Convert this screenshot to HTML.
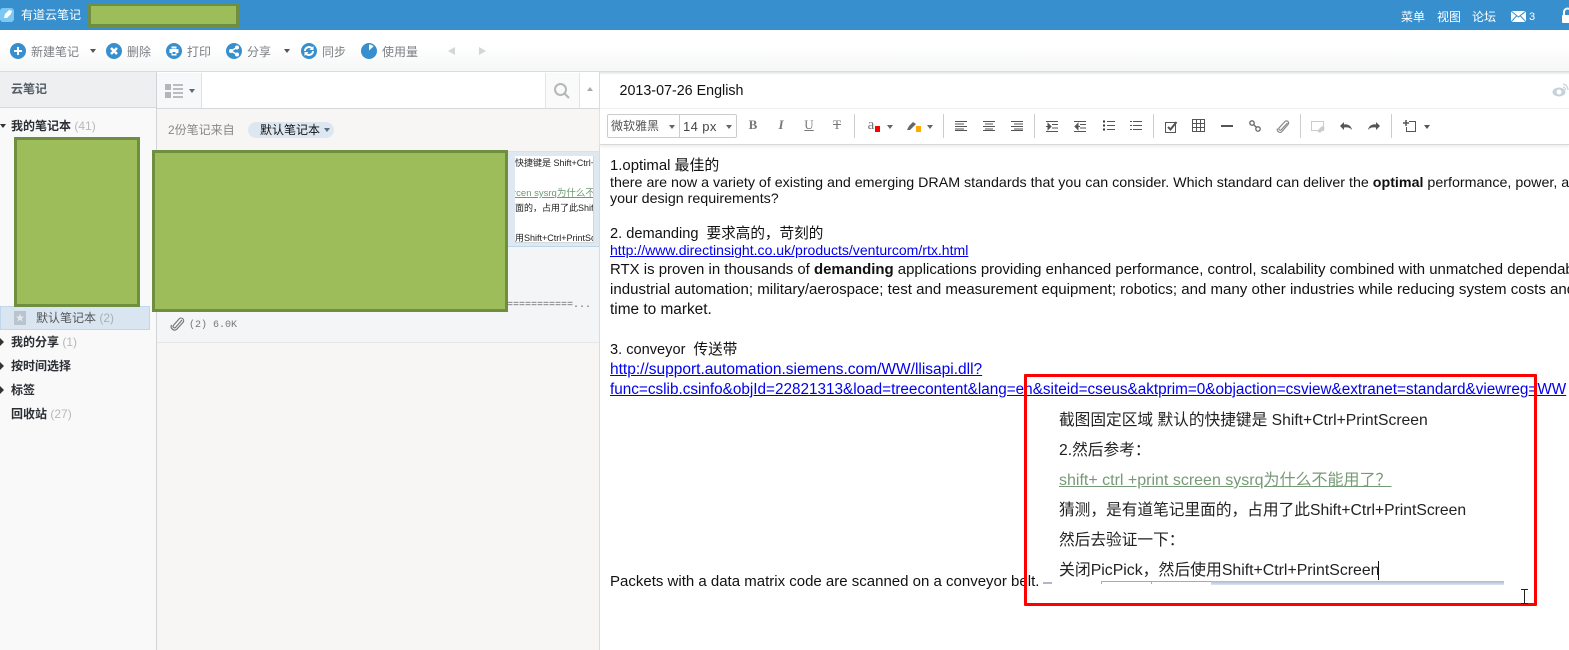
<!DOCTYPE html>
<html><head><meta charset="utf-8"><style>
html,body{margin:0;padding:0;width:1569px;height:650px;overflow:hidden;background:#fff;font-family:"Liberation Sans","Noto Sans CJK SC",sans-serif}
.a,.t{position:absolute}
.t{white-space:nowrap;line-height:16px;font-size:12px}
.g{position:absolute;background:#9dbd5b;border:3px solid #6f8e40;box-sizing:border-box}
.tb{color:#7b7f84}
.nb{color:#2b2f33;font-weight:bold}
.c{color:#b5b9bc;font-weight:normal}
.e{font-size:14.25px;color:#111;line-height:16px}
.e2{font-size:14.95px;color:#111;line-height:20px}
a{color:#00e;text-decoration:underline}
.tri{position:absolute;width:0;height:0;border-left:3px solid transparent;border-right:3px solid transparent;border-top:4px solid #555}
.tr{position:absolute;width:0;height:0;border-top:4px solid transparent;border-bottom:4px solid transparent;border-left:4px solid #333}
.sep{position:absolute;width:1px;height:24px;top:114px;background:#ccc}
.ic{position:absolute;top:43px;width:16px;height:16px}
.ti{position:absolute;font-family:"Liberation Serif",serif;font-size:13px;line-height:16px;color:#777;text-align:center}
.p{font-size:15.7px;color:#222;line-height:20px}
svg{position:absolute;overflow:visible}
</style></head><body>
<!-- top bar -->
<div class="a" style="left:0;top:0;width:1569px;height:30px;background:#388fce"></div>
<svg style="left:0;top:7px" width="15" height="16"><rect x="0" y="1" width="14" height="14" rx="3" fill="#7cc8f2"/><path d="M4 11 L5 7 L9 3 L12 4 L11 7 L7 11Z" fill="#fff"/></svg>
<div class="t" style="left:21px;top:7px;color:#fff;font-size:12px">有道云笔记</div>
<div class="g" style="left:88px;top:3px;width:151px;height:24px"></div>
<div class="t" style="left:1401px;top:9px;color:#fff">菜单</div>
<div class="t" style="left:1437px;top:9px;color:#fff">视图</div>
<div class="t" style="left:1472px;top:9px;color:#fff">论坛</div>
<svg style="left:1511px;top:11px" width="15" height="12"><rect width="15" height="11" fill="#fff"/><path d="M0 0L7.500 6L15 0M0 11L5.500 5M15 11L9.500 5" stroke="#388fce" fill="none"/></svg>
<div class="t" style="left:1529px;top:9px;color:#fff;font-size:11px">3</div>
<svg style="left:1562px;top:8px" width="8" height="16"><path d="M2 7V4a3.500 3.500 0 0 1 7 0V7" fill="none" stroke="#fff" stroke-width="2"/><rect x="0" y="7" width="9" height="8" rx="1" fill="#fff"/></svg>
<!-- toolbar -->
<div class="a" style="left:0;top:30px;width:1569px;height:42px;background:linear-gradient(#fff 40%,#f5f6f6);border-bottom:1px solid #d6dbdd;box-sizing:border-box"></div>
<svg class="ic" style="left:10px"><circle cx="8" cy="8" r="8" fill="#388fce"/><path d="M8 4v8M4 8h8" stroke="#fff" stroke-width="2"/></svg>
<div class="t tb" style="left:31px;top:44px">新建笔记</div><div class="tri" style="left:90px;top:49px"></div>
<svg class="ic" style="left:106px"><circle cx="8" cy="8" r="8" fill="#388fce"/><path d="M5 5l6 6M11 5l-6 6" stroke="#fff" stroke-width="2.500"/></svg>
<div class="t tb" style="left:127px;top:44px">删除</div>
<svg class="ic" style="left:166px"><circle cx="8" cy="8" r="8" fill="#388fce"/><path d="M5.500 3.500h5v2h-5zM3.500 6h9v4h-2v2.500h-5V10h-2z" fill="#fff"/><path d="M6.500 9h3v2h-3z" fill="#388fce"/></svg>
<div class="t tb" style="left:187px;top:44px">打印</div>
<svg class="ic" style="left:226px"><circle cx="8" cy="8" r="8" fill="#388fce"/><path d="M11 4.500L5 8l6 3.500" stroke="#fff" stroke-width="1.500" fill="none"/><circle cx="11" cy="4.500" r="2" fill="#fff"/><circle cx="5" cy="8" r="2" fill="#fff"/><circle cx="11" cy="11.500" r="2" fill="#fff"/></svg>
<div class="t tb" style="left:247px;top:44px">分享</div><div class="tri" style="left:284px;top:49px"></div>
<svg class="ic" style="left:301px"><circle cx="8" cy="8" r="8" fill="#388fce"/><path d="M4 8a4 4 0 0 1 7-2.600M12 8a4 4 0 0 1-7 2.600" fill="none" stroke="#fff" stroke-width="2"/><path d="M12.500 3v4h-4zM3.500 13V9h4z" fill="#fff"/></svg>
<div class="t tb" style="left:322px;top:44px">同步</div>
<svg class="ic" style="left:361px"><circle cx="8" cy="8" r="8" fill="#388fce"/><path d="M8 7.500V1.500A6.500 6.500 0 0 1 12.500 3.500z" fill="#fff"/></svg>
<div class="t tb" style="left:382px;top:44px">使用量</div>
<div class="a" style="left:448px;top:47px;width:0;height:0;border-top:4px solid transparent;border-bottom:4px solid transparent;border-right:7px solid #d3d5d7"></div>
<div class="a" style="left:479px;top:47px;width:0;height:0;border-top:4px solid transparent;border-bottom:4px solid transparent;border-left:7px solid #d3d5d7"></div>
<!-- sidebar -->
<div class="a" style="left:0;top:72px;width:157px;height:578px;background:#f9f9fa;border-right:1px solid #d0d4d7;box-sizing:border-box"></div>
<div class="a" style="left:0;top:72px;width:156px;height:36px;background:#edeff1;border-bottom:1px solid #d6dadd;box-sizing:border-box"></div>
<div class="t" style="left:11px;top:81px;color:#555c66;font-weight:bold;font-size:12px">云笔记</div>
<div class="tri" style="left:0;top:124px;border-top-color:#333"></div>
<div class="t nb" style="left:11px;top:118px">我的笔记本 <span class="c">(41)</span></div>
<div class="a" style="left:0;top:306px;width:150px;height:24px;background:#d9e5f1;border:1px solid #c0d6ea;box-sizing:border-box"></div>
<div class="a" style="left:14px;top:311px;width:12px;height:14px;background:#b9c4cf;color:#e6ebf0;font-size:9px;line-height:14px;text-align:center">★</div>
<div class="t" style="left:36px;top:310px;color:#555">默认笔记本 <span style="color:#aab0b5">(2)</span></div>
<div class="g" style="left:14px;top:137px;width:126px;height:170px"></div>
<div class="tr" style="left:0;top:338px"></div><div class="t nb" style="left:11px;top:334px">我的分享 <span class="c">(1)</span></div>
<div class="tr" style="left:0;top:362px"></div><div class="t nb" style="left:11px;top:358px">按时间选择</div>
<div class="tr" style="left:0;top:386px"></div><div class="t nb" style="left:11px;top:382px">标签</div>
<div class="t nb" style="left:11px;top:406px">回收站 <span class="c">(27)</span></div>
<!-- list -->
<div class="a" style="left:157px;top:72px;width:443px;height:578px;background:#f7f6f5;border-right:1px solid #d9dcde;box-sizing:border-box"></div>
<div class="a" style="left:157px;top:72px;width:442px;height:37px;background:#fff;border-bottom:1px solid #d6dadd;box-sizing:border-box"></div>
<div class="a" style="left:157px;top:73px;width:45px;height:35px;background:#f7f8f9;border-right:1px solid #dfe2e4;box-sizing:border-box"></div>
<svg style="left:165px;top:84px" width="20" height="15"><path d="M0 0h6v6H0zM0 8h6v6H0z" fill="#b2b6ba"/><path d="M8 1h10M8 5h10M8 9h10M8 13h10" stroke="#a5a9ad" stroke-width="1.500"/></svg>
<div class="tri" style="left:189px;top:89px;border-top-color:#666"></div>
<div class="a" style="left:545px;top:73px;width:33px;height:35px;border-left:1px solid #e2e4e6;border-right:1px solid #e2e4e6;background:#fafafa;box-sizing:content-box"></div>
<svg style="left:553px;top:82px" width="17" height="17"><circle cx="7.500" cy="7.500" r="5.500" fill="none" stroke="#b4b8bb" stroke-width="2"/><path d="M11.500 11.500L16 16" stroke="#b4b8bb" stroke-width="2.200"/></svg>
<div class="a" style="left:587px;top:87px;width:0;height:0;border-left:3px solid transparent;border-right:3px solid transparent;border-bottom:4px solid #aaa"></div>
<div class="t" style="left:168px;top:122px;color:#888">2份笔记来自</div>
<div class="a" style="left:248px;top:122px;width:86px;height:16px;background:#dde7f1;border-radius:8px"></div>
<div class="t" style="left:260px;top:122px;color:#111">默认笔记本</div>
<div class="tri" style="left:324px;top:128px;border-top-color:#5f6d80"></div>
<div class="a" style="left:157px;top:151px;width:442px;height:96px;background:#dfe8f1;border-bottom:1px solid #bcd6ea;border-top:1px solid #d6e2ec;box-sizing:border-box"></div>
<div class="a" style="left:157px;top:247px;width:442px;height:96px;background:#f4f5f7;border-bottom:1px solid #e2e7ea;box-sizing:border-box"></div>
<div class="a" style="left:515px;top:156px;width:79px;height:87px;background:#fff;overflow:hidden;border-right:1px solid #d4d8db;border-bottom:1px solid #d4d8db;box-sizing:border-box;font-size:9px;color:#222">
<div class="t" style="left:0;top:-1px;font-size:9px;filter:blur(.3px)">快捷键是 Shift+Ctrl+PrintScreen</div>
<div class="t" style="left:-2px;top:30px;font-size:9.500px;color:#6d9a70;text-decoration:underline;filter:blur(.3px)">rcen sysrq为什么不能用了</div>
<div class="t" style="left:0;top:44px;font-size:9px;filter:blur(.3px)">面的，占用了此Shift+Ctrl</div>
<div class="t" style="left:0;top:74px;font-size:9px;filter:blur(.3px)">用Shift+Ctrl+PrintScreen</div>
</div>
<div class="g" style="left:152px;top:150px;width:356px;height:162px"></div>
<div class="t" style="left:507px;top:298px;font:10px/16px 'Liberation Mono',monospace;color:#666">===========...</div>
<svg style="left:171px;top:317px" width="13" height="14" viewBox="0 0 13 14"><path d="M11 3L4.500 10.500a1.500 1.500 0 0 1-2.200-2L8 2a2.600 2.600 0 0 1 4 3.400L5.500 12.500a3.500 3.500 0 0 1-5-4.500" fill="none" stroke="#777" stroke-width="1.200"/></svg>
<div class="t" style="left:189px;top:318px;font:10px/16px 'Liberation Mono','Noto Sans CJK SC',monospace;color:#777">(2) 6.0K</div>
<!-- editor header -->
<div class="a" style="left:600px;top:72px;width:969px;height:3px;background:linear-gradient(#dfe3e5,#fff)"></div>
<div class="t" style="left:619.500px;top:83px;font-size:14.300px;color:#111">2013-07-26 English</div>
<svg style="left:1552px;top:83px" width="17" height="14"><ellipse cx="7" cy="9" rx="6.500" ry="4.500" fill="#c4d2da"/><circle cx="7" cy="9" r="2.500" fill="#fff"/><path d="M11 1a6 6 0 0 1 5 6M11 4a3 3 0 0 1 2.500 3" fill="none" stroke="#c4d2da" stroke-width="1.200"/></svg>
<div class="a" style="left:600px;top:108px;width:969px;height:37px;border-top:1px solid #eef0f1;border-bottom:1px solid #d8d8d8;box-shadow:0 2px 3px #eee;box-sizing:border-box;background:#fff"></div>
<div class="a" style="left:607px;top:114px;width:130px;height:24px;border:1px solid #ccc;box-sizing:border-box;border-radius:2px"></div>
<div class="a" style="left:679px;top:114px;width:1px;height:24px;background:#ccc"></div>
<div class="t" style="left:611px;top:118px;color:#555;font-size:12px">微软雅黑</div>
<div class="tri" style="left:669px;top:125px;border-top-color:#666"></div>
<div class="t" style="left:683px;top:119px;color:#444;font-size:13px;letter-spacing:.4px">14 px</div>
<div class="tri" style="left:726px;top:125px;border-top-color:#666"></div>
<div class="ti" style="left:748px;top:117px;width:10px;font-weight:bold">B</div>
<div class="ti" style="left:776px;top:117px;width:10px;font-style:italic;font-weight:bold">I</div>
<div class="ti" style="left:804px;top:117px;width:10px;text-decoration:underline">U</div>
<div class="ti" style="left:832px;top:117px;width:10px;text-decoration:line-through">T</div>
<div class="sep" style="left:854px"></div>
<div class="ti" style="left:866px;top:117px;width:10px;font-size:15px">a</div>
<div class="a" style="left:875px;top:126px;width:5px;height:6px;background:#f00"></div>
<div class="tri" style="left:887px;top:125px;border-top-color:#666"></div>
<svg style="left:907px;top:122px" width="10" height="9"><path d="M0 8L2 4 6 0l3 2-4 4-2 2z" fill="#666"/></svg>
<div class="a" style="left:916px;top:126px;width:5px;height:6px;background:#fa0"></div>
<div class="tri" style="left:927px;top:125px;border-top-color:#666"></div>
<div class="sep" style="left:943px"></div>
<svg style="left:955px;top:120px" width="170" height="13" stroke="#555" fill="none">
<path d="M0 1.500h12M0 4h9M0 6.500h12M0 9h9M0 10.500h12"/>
<path d="M28 1.500h12M30 4h8M28 6.500h12M30 9h8M28 10.500h12"/>
<path d="M56 1.500h12M59 4h9M56 6.500h12M59 9h9M56 10.500h12"/>
<path d="M91 1.500h12M97 4.500h6M97 8h6M91 11.500h12M91 6.500h3"/><path d="M93 3.500l3 3-3 3z" fill="#555"/>
<path d="M119 1.500h12M125 4.500h6M125 8h6M119 11.500h12M122 6.500h3"/><path d="M123 3.500l-3 3 3 3z" fill="#555"/>
<path d="M152 1.500h8M152 5.500h8M152 9.500h8"/><path d="M148 1.500h2M148 5.500h2M148 9.500h2" stroke="#333" stroke-width="2"/>
</svg>
<div class="sep" style="left:1034px"></div>
<svg style="left:1130px;top:120px" width="14" height="13" stroke="#555" fill="none"><path d="M3 1.500h9M3 5.500h9M3 9.500h9M0 1.500h2M0 5.500h2M0 9.500h2"/></svg>
<div class="sep" style="left:1153px"></div>
<svg style="left:1165px;top:120px" width="13" height="13" fill="none" stroke="#555"><path d="M.5 2.500h10v10H.5z"/><path d="M3 7l2.500 2.500L11.500 2" stroke-width="2"/></svg>
<svg style="left:1192px;top:119px" width="13" height="13" fill="none" stroke="#555"><path d="M.5.500h12v12H.5zM4.500.500v12M8.500.500v12M.5 4.500h12M.5 8.500h12"/></svg>
<div class="a" style="left:1221px;top:125px;width:12px;height:2px;background:#555"></div>
<svg style="left:1249px;top:120px" width="12" height="12" fill="none" stroke="#666" stroke-width="1.300"><circle cx="3" cy="3" r="2.200"/><circle cx="9" cy="9" r="2.200"/><path d="M4.500 4.500l3 3"/></svg>
<svg style="left:1277px;top:120px" width="12" height="13" fill="none" stroke="#888" stroke-width="1.200"><path d="M10.500 3L4 10a1.500 1.500 0 0 1-2-2L8 1.500a2 2 0 0 1 3 3L4.500 12a2.800 2.800 0 0 1-4-3.500"/></svg>
<div class="sep" style="left:1300px"></div>
<svg style="left:1311px;top:121px" width="14" height="13"><rect x=".5" y=".5" width="12" height="9" fill="none" stroke="#ccc"/><path d="M6 10l5-5 3 2-5 5z" fill="#ccc"/></svg>
<svg style="left:1340px;top:121px" width="13" height="10"><path d="M0 5L4 1v2.500c4-.5 7 1 8 5.500-2-2.500-4-3-8-2.500V9z" fill="#555"/></svg>
<svg style="left:1368px;top:121px" width="13" height="10"><path d="M12 5L8 1v2.500C4 3 1 4.500 0 9c2-2.500 4-3 8-2.500V9z" fill="#555"/></svg>
<div class="sep" style="left:1391px"></div>
<svg style="left:1403px;top:120px" width="13" height="12" fill="none" stroke="#555"><path d="M6 1.500h6.500v10H3.500V7"/><path d="M0 3h6M3 0v6" stroke-width="1.500"/></svg>
<div class="tri" style="left:1424px;top:125px;border-top-color:#555"></div>
<!-- editor body -->
<div class="t e" style="left:610px;top:158px;font-size:14.900px">1.optimal 最佳的</div>
<div class="t e" style="left:610px;top:175px">there are now a variety of existing and emerging DRAM standards that you can consider. Which standard can deliver the <b>optimal</b> performance, power, and area for</div>
<div class="t e" style="left:610px;top:191px">your design requirements?</div>
<div class="t e" style="left:610px;top:226px;font-size:14.600px">2. demanding&nbsp; 要求高的，苛刻的</div>
<div class="t e" style="left:610px;top:242px;font-size:14.050px"><a>http://www.directinsight.co.uk/products/venturcom/rtx.html</a></div>
<div class="t e2" style="left:610px;top:260px">RTX is proven in thousands of <b>demanding</b> applications providing enhanced performance, control, scalability combined with unmatched dependability</div>
<div class="t e2" style="left:610px;top:280px;font-size:15.050px">industrial automation; military/aerospace; test and measurement equipment; robotics; and many other industries while reducing system costs and</div>
<div class="t e2" style="left:610px;top:300px;font-size:15.400px">time to market.</div>
<div class="t e2" style="left:610px;top:340px;font-size:14.600px">3. conveyor&nbsp; 传送带</div>
<div class="t e2" style="left:610px;top:360px;font-size:15.500px"><a>http://support.automation.siemens.com/WW/llisapi.dll?</a></div>
<div class="t e2" style="left:610px;top:380px;font-size:15.300px"><a>func=cslib.csinfo&amp;objId=22821313&amp;load=treecontent&amp;lang=en&amp;siteid=cseus&amp;aktprim=0&amp;objaction=csview&amp;extranet=standard&amp;viewreg=WW</a></div>
<div class="t e2" style="left:610px;top:572px;font-size:15px">Packets with a data matrix code are scanned on a conveyor belt.</div>
<!-- red box -->
<div class="a" style="left:1024px;top:374px;width:513px;height:232px;border:3px solid #f00;box-sizing:border-box;border-radius:1px"></div>
<div class="t p" style="left:1059px;top:411px">截图固定区域 默认的快捷键是 Shift+Ctrl+PrintScreen</div>
<div class="t p" style="left:1059px;top:441px">2.然后参考：</div>
<div class="t p" style="left:1059px;top:471px;color:#769a76;text-decoration:underline;font-size:16px">shift+ ctrl +print screen sysrq为什么不能用了？</div>
<div class="t p" style="left:1059px;top:501px">猜测，是有道笔记里面的，占用了此Shift+Ctrl+PrintScreen</div>
<div class="t p" style="left:1059px;top:531px">然后去验证一下：</div>
<div class="t p" style="left:1059px;top:561px;font-size:15.850px">关闭PicPick，然后使用Shift+Ctrl+PrintScreen</div>
<div class="a" style="left:1378px;top:561px;width:1px;height:19px;background:#111"></div>
<div class="a" style="left:1043px;top:582px;width:9px;height:2px;background:#b0b8c8"></div>
<div class="a" style="left:1101px;top:581px;width:110px;height:3px;border-top:1px solid #aaa;border-left:1px solid #aaa;box-sizing:border-box"></div>
<div class="a" style="left:1151px;top:581px;width:1px;height:3px;background:#aaa"></div>
<div class="a" style="left:1211px;top:581px;width:293px;height:4px;background:linear-gradient(#a9b9d0,#dfe5ee)"></div>
<svg style="left:1520px;top:589px" width="9" height="16" stroke="#222" fill="none"><path d="M1 .5h7M4.500.500v14M1 14.500h7"/></svg>
</body></html>
